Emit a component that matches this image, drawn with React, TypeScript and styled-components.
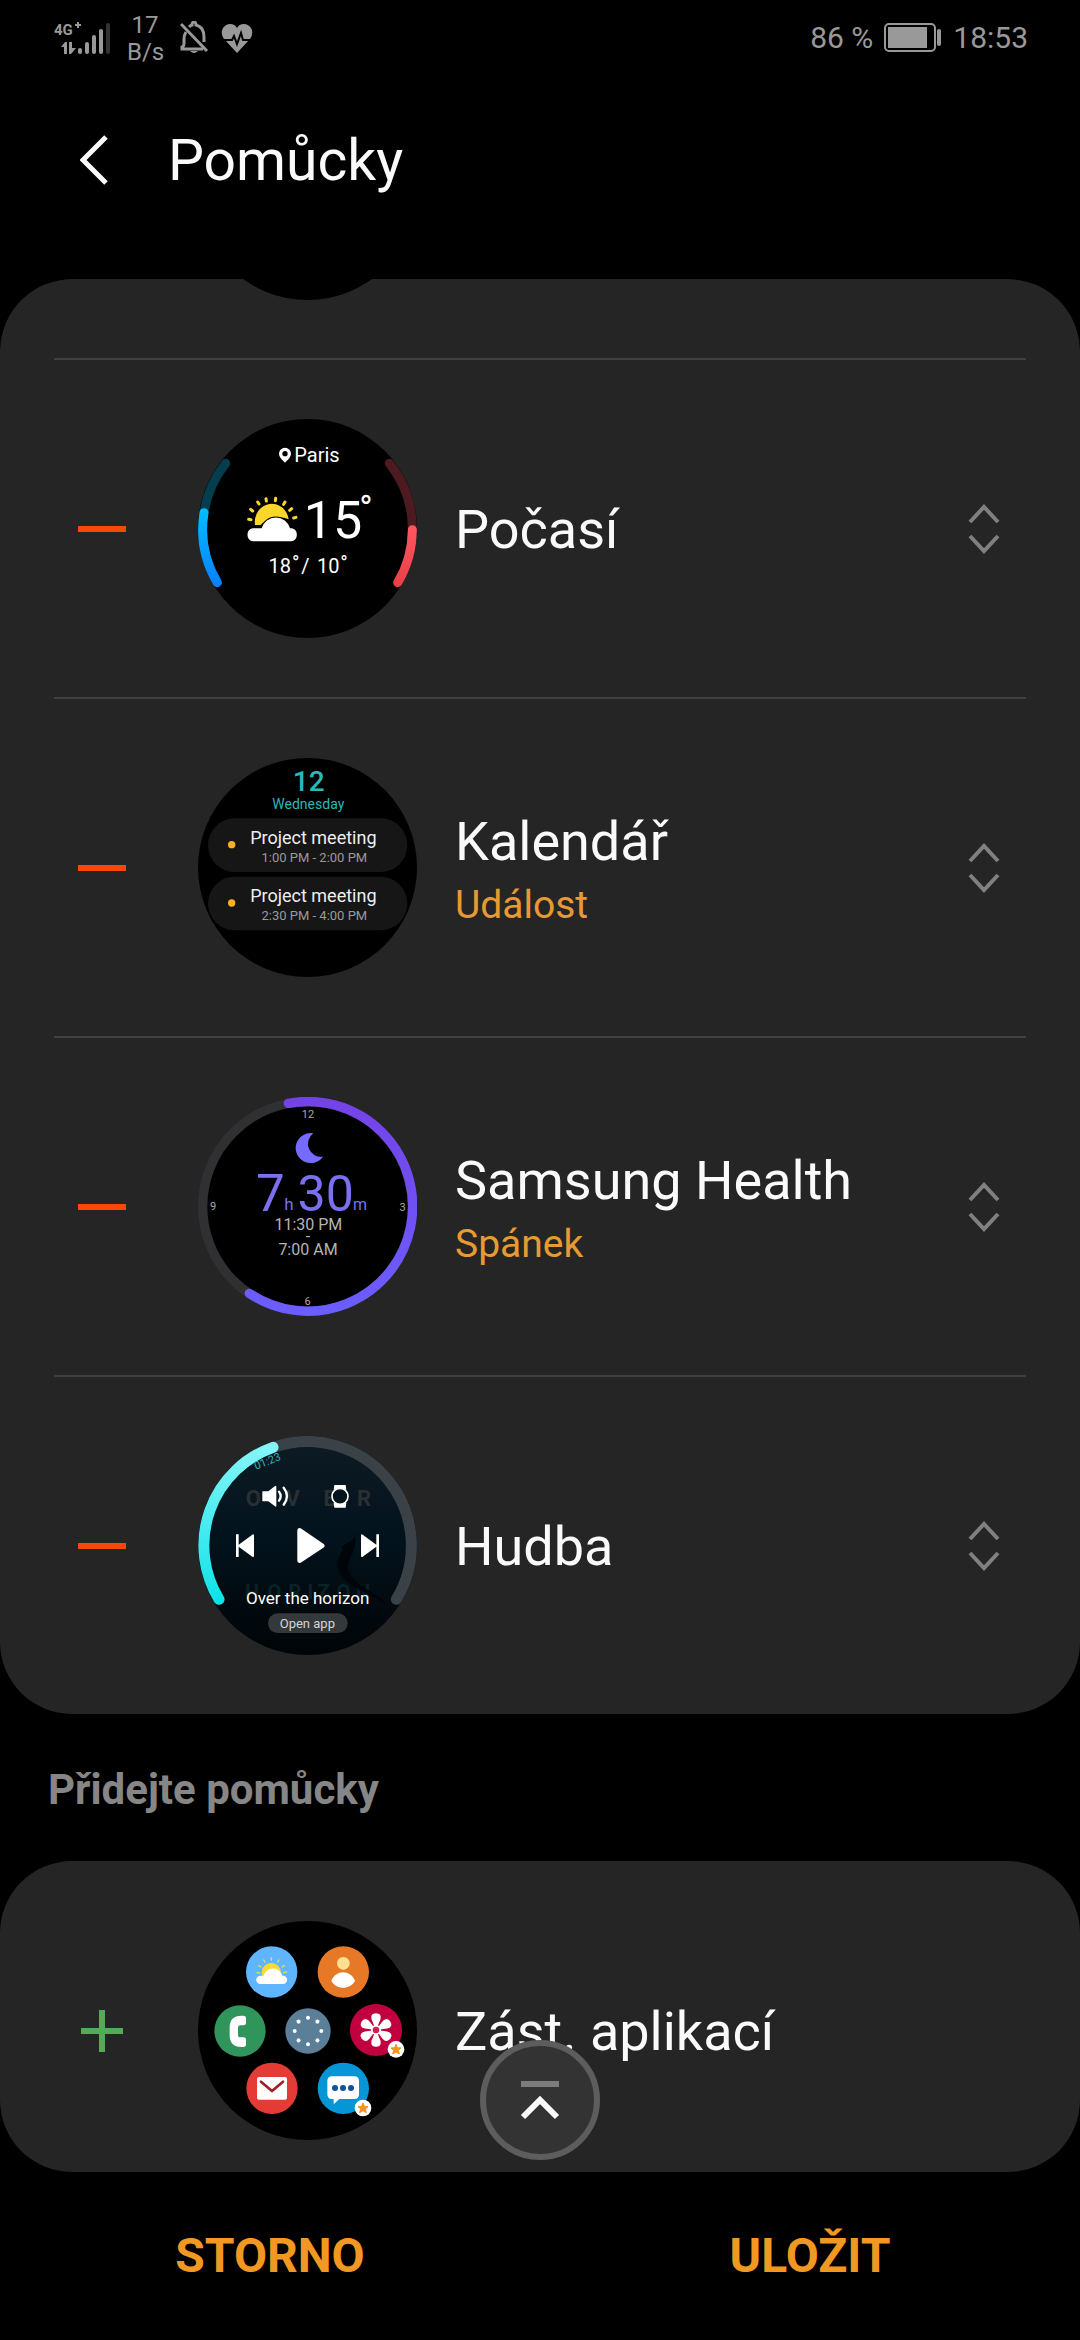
import React from "react";
import styled, { createGlobalStyle } from "styled-components";

const GlobalStyle = createGlobalStyle`
  * { box-sizing: border-box; }
  body { margin: 0; background: #000; }
  button { border: 0; padding: 0; background: none; font: inherit; cursor: pointer; }
  svg { display: block; flex: none; }
`;

const Screen = styled.div`
  display: flex;
  flex-direction: column;
  height: 100vh;
  background: #000;
  color: #fafafa;
  font-family: Roboto, "Noto Sans", sans-serif;
`;

const StatusBar = styled.div`
  display: flex;
  justify-content: space-between;
  align-items: center;
  flex: none;
  height: 76px;
  padding: 0 52px 0 54px;
  color: #999;
`;

const StatusGroup = styled.div<{ $gap: number }>`
  display: flex;
  align-items: center;
  gap: ${(p) => p.$gap}px;
`;

const NetSpeed = styled.div`
  width: 36px;
  margin: 2px 6px 0 4px;
  font-size: 24px;
  line-height: 27px;
  text-align: center;
`;

const StatusText = styled.span`
  font-size: 30px;
  line-height: 36px;
`;

const Header = styled.header`
  display: flex;
  align-items: center;
  flex: none;
  height: 167px;
  margin-bottom: 36px;
  padding: 0 54px;
`;

const BackButton = styled.button`
  display: flex;
  align-items: center;
  justify-content: center;
  width: 80px;
  height: 80px;
  margin-right: 34px;
`;

const Title = styled.h1`
  margin: 0;
  padding-top: 3px;
  font-size: 57px;
  line-height: 68px;
  font-weight: 400;
`;

const ListViewport = styled.main`
  position: relative;
  flex: 1;
  min-height: 0;
`;

const ListClip = styled.div`
  height: 100%;
  overflow: hidden;
  border-radius: 72px;
`;

const Card = styled.ul`
  margin: 0;
  padding: 0 54px;
  list-style: none;
  background: #252525;
  border-radius: 72px;
`;

const ScrolledRow = styled.li`
  display: flex;
  align-items: flex-end;
  height: 79px;
  padding: 0 0 58px 144px;
  overflow: hidden;
`;

const BlankDisc = styled.div`
  flex: none;
  width: 219px;
  height: 219px;
  border-radius: 50%;
  background: #000;
`;

const Row = styled.li<{ $divided?: boolean }>`
  display: flex;
  align-items: center;
  height: 339px;
  border-top: ${(p) => (p.$divided ? "2px solid #404040" : "0")};
`;

const EditButton = styled.button`
  display: flex;
  align-items: center;
  justify-content: center;
  width: 96px;
  height: 96px;
  margin-right: 48px;
`;

const Labels = styled.div`
  display: flex;
  flex-direction: column;
  flex: 1;
  padding: 3px 0 0 38px;
`;

const Name = styled.span`
  font-size: 54px;
  line-height: 66px;
`;

const Detail = styled.span`
  font-size: 39px;
  line-height: 48px;
  margin-top: 6px;
  color: #e89a32;
`;

const ReorderButton = styled.button`
  display: flex;
  align-items: center;
  justify-content: center;
  width: 84px;
  height: 84px;
`;

const SectionTitle = styled.h2`
  display: flex;
  align-items: center;
  height: 147px;
  margin: 0;
  padding: 4px 48px 0;
  color: #868686;
  font-size: 42px;
  line-height: 48px;
  font-weight: 700;
`;

const ToTopButton = styled.button`
  position: absolute;
  left: 50%;
  bottom: 12px;
  display: flex;
  align-items: center;
  justify-content: center;
  width: 120px;
  height: 120px;
  margin-left: -60px;
  border: 6px solid #5d5d5d;
  border-radius: 50%;
  background: #333;
`;

const Footer = styled.footer`
  display: grid;
  grid-template-columns: 1fr 1fr;
  flex: none;
  height: 168px;
`;

const FooterButton = styled.button`
  color: #f09821;
  font-size: 48px;
  line-height: 56px;
  font-weight: 700;
`;

const ROBOTO = "Roboto, 'Noto Sans', sans-serif";

/* Preview discs are drawn at three units per pixel. */
function Disc({ top, label, children }: { top: number; label: string; children: React.ReactNode }) {
  return (
    <svg width="219" height="219" viewBox={`54 ${top} 657 657`} role="img" aria-label={label} fontFamily={ROBOTO} textAnchor="middle">
      {children}
    </svg>
  );
}

function WeatherDisc() {
  const arc = (from: string, to: string, stroke: string) => (
    <path d={`M${from} A314 314 0 0 1 ${to}`} stroke={stroke} strokeWidth="27" strokeLinecap="round" fill="none" />
  );
  return (
    <Disc top={59} label="Počasí">
      <defs>
        <linearGradient id="cold" gradientUnits="userSpaceOnUse" x1="0" y1="330" x2="0" y2="560">
          <stop offset="0" stopColor="#00bdff" />
          <stop offset="1" stopColor="#0a80ff" />
        </linearGradient>
        <linearGradient id="hot" gradientUnits="userSpaceOnUse" x1="0" y1="380" x2="0" y2="560">
          <stop offset="0" stopColor="#ff5761" />
          <stop offset="1" stopColor="#e94047" />
        </linearGradient>
      </defs>
      <circle cx="382.500" cy="387.500" r="328.500" fill="#000" />
      {arc("72 340", "137 192", "#043d4d")}
      {arc("112 550", "72 340", "url(#cold)")}
      {arc("628 192", "697 391", "#4c1b20")}
      {arc("697 391", "653 550", "url(#hot)")}
      <path d="M315 145a18 18 0 0 1 18 18c0 11-11 19-18 27c-7-8-18-16-18-27a18 18 0 0 1 18-18z" fill="#fff" />
      <circle cx="315" cy="163" r="8" fill="#000" />
      <text x="411" y="188" fontSize="60" fill="#fff">Paris</text>
      <g stroke="#fbd72b" strokeWidth="9" strokeLinecap="round">
        <path d="M206 360l7 1M212 330l6 5M233 308l4 6M258 298l1 7M287 297l-1 7M315 308l-4 7M335 328l-6 5M348 354l-7 2" />
      </g>
      <path d="M225 377a51 55 0 0 1 101-17a70 62 0 0 0-84 17z" fill="#fbd72b" />
      <path d="M218 426a20 20 0 0 1 0-39h27a44 44 0 0 1 85 0h5a20 20 0 0 1 0 39z" fill="#fff" stroke="#000" strokeWidth="6" paintOrder="stroke" />
      <text x="459" y="417" fontSize="156" fill="#fff">15</text>
      <text x="558" y="365" fontSize="108" fill="#fff">°</text>
      <g fontSize="60" fill="#fff">
        <text x="299" y="521">18</text>
        <text x="347" y="511">°</text>
        <text x="376" y="521">/</text>
        <text x="445" y="521">10</text>
        <text x="492" y="511">°</text>
      </g>
    </Disc>
  );
}

function CalendarDisc() {
  const event = (y: number, time: string) => (
    <>
      <rect x="84" y={y} width="598" height="161" rx="80" fill="#161616" />
      <circle cx="155" cy={y + 79} r="11" fill="#fbb11f" />
      <text x="400" y={y + 76} fontSize="54" fill="#eee">Project meeting</text>
      <text x="403" y={y + 131} fontSize="39" fill="#9a9a9a">{time}</text>
    </>
  );
  return (
    <Disc top={57} label="Kalendář">
      <circle cx="382.500" cy="385.500" r="328.500" fill="#000" />
      <text x="386" y="157" fontSize="84" fontWeight="500" fill="#28b9b8">12</text>
      <text x="385" y="209" fontSize="42" fill="#28b9b8">Wednesday</text>
      {event(238, "1:00 PM - 2:00 PM")}
      {event(413, "2:30 PM - 4:00 PM")}
    </Disc>
  );
}

function SleepDisc() {
  return (
    <Disc top={54} label="Spánek">
      <defs>
        <linearGradient id="sleep" x1="0" y1="0" x2="0" y2="1">
          <stop offset="0" stopColor="#7443e8" />
          <stop offset="1" stopColor="#6b5dff" />
        </linearGradient>
      </defs>
      <circle cx="382.500" cy="382.500" r="314.500" fill="#000" stroke="#303033" strokeWidth="28" />
      <path d="M325 73A314.500 314.500 0 1 1 208 643" fill="none" stroke="url(#sleep)" strokeWidth="28" strokeLinecap="round" />
      <g fontSize="33" fill="#a8a8a8">
        <text x="384" y="117">12</text>
        <text x="99" y="394">9</text>
        <text x="668" y="395">3</text>
        <text x="383" y="677">6</text>
      </g>
      <path d="M400 163A45 45 0 1 0 429 233A39 39 0 0 1 400 163z" fill="#756bff" />
      <g fill="#7b70f2">
        <text x="271" y="395" fontSize="153">7</text>
        <text x="327" y="394" fontSize="51">h</text>
        <text x="437" y="395" fontSize="150">30</text>
        <text x="540" y="394" fontSize="48">m</text>
      </g>
      <g fontSize="48" fill="#b4b4b4">
        <text x="385" y="454">11:30 PM</text>
        <text x="384" y="490">-</text>
        <text x="384" y="528">7:00 AM</text>
      </g>
    </Disc>
  );
}

function MusicDisc() {
  return (
    <Disc top={51} label="Hudba">
      <defs>
        <linearGradient id="sea" x1="0" y1="0" x2="0" y2="1">
          <stop offset="0" stopColor="#0e1b24" />
          <stop offset="0.450" stopColor="#03131d" />
          <stop offset="1" stopColor="#000406" />
        </linearGradient>
        <linearGradient id="elapsed" x1="0" y1="0" x2="0" y2="1">
          <stop offset="0" stopColor="#84f5f7" />
          <stop offset="1" stopColor="#0fe3e8" />
        </linearGradient>
      </defs>
      <circle cx="382.500" cy="379.500" r="328.500" fill="url(#sea)" />
      <path d="M279 85A312 312 0 0 1 649 541" fill="none" stroke="#3a4247" strokeWidth="33" strokeLinecap="round" />
      <path d="M117 541A312 312 0 0 1 279 85" fill="none" stroke="url(#elapsed)" strokeWidth="33" strokeLinecap="round" />
      <text transform="translate(266 137) rotate(-22)" fontSize="33" fill="#39aeb6">01:23</text>
      <g fontSize="66" fontWeight="700" fill="#2a2f32">
        <text x="220" y="260">O</text>
        <text x="338" y="260">V</text>
        <text x="449" y="260">E</text>
        <text x="552" y="260">R</text>
      </g>
      <g fontSize="60" fontWeight="700" fill="#0a2226">
        <text x="216" y="541">H</text>
        <text x="283" y="541">O</text>
        <text x="345" y="541">R</text>
        <text x="391" y="541">I</text>
        <text x="431" y="541">Z</text>
        <text x="490" y="541">O</text>
        <text x="549" y="541">N</text>
      </g>
      <path d="M526 348C518 372 492 372 484 386C496 392 470 410 473 440C480 496 560 520 630 560C570 510 502 486 504 444C506 415 530 400 526 348z" fill="#000509" />
      <g fill="#fff">
        <path d="M247 217h18l20-16q4-2 4 3v56q0 5-4 2l-20-15h-18z" />
        <path d="M297 218q10 13 0 27M311 206q20 25 0 51" fill="none" stroke="#fff" strokeWidth="7" strokeLinecap="round" />
        <path d="M463 198h34l2 14h-38zM461 252h38l-2 14h-34z" />
        <circle cx="480" cy="232" r="24" fill="#06141c" stroke="#fff" strokeWidth="5" />
        <path d="M168 346h8v31l41-30q5-3 5 3v60q0 6-5 3l-41-30v31h-8z" />
        <path d="M597 346h-8v31l-41-30q-5-3-5 3v60q0 6 5 3l41-30v31h8z" />
        <path d="M352 335q0-10 10-7l68 46q8 6 0 12l-68 45q-10 3-10-7z" />
      </g>
      <text x="383" y="555" fontSize="51" fill="#fff">Over the horizon</text>
      <rect x="264" y="583" width="239" height="59" rx="29" fill="#33383b" />
      <text x="382" y="626" fontSize="39" fill="#d6d6d6">Open app</text>
    </Disc>
  );
}

function AppsDisc() {
  const badge = (x: number, y: number) => (
    <g transform={`translate(${x} ${y})`}>
      <circle r="25" fill="#fff" />
      <path d="M0-15l4 10l11 1l-8 7l3 11l-10-6l-10 6l3-11l-8-7l11-1z" fill="#f7931e" stroke="#f7931e" strokeWidth="3" strokeLinejoin="round" />
    </g>
  );
  const turn = (count: number) => Array.from({ length: count }, (_, i) => (i * 360) / count);
  return (
    <Disc top={69} label="Zást. aplikací">
      <circle cx="382.500" cy="397.500" r="328.500" fill="#000" />
      <circle cx="275" cy="222" r="77" fill="#5fb5ff" />
      <path d="M231 224l8 1M236 203l7 4M251 186l4 6M274 179v8M297 186l-4 6M313 203l-7 4M319 222l-8 2" stroke="#e3e05a" strokeWidth="4" strokeLinecap="round" />
      <circle cx="274" cy="224" r="29" fill="#fbd936" />
      <path d="M241 258a12 12 0 0 1 0-25h10a29 29 0 0 1 56 0h2a12 12 0 0 1 0 25z" fill="#fff" />

      <circle cx="490" cy="222" r="77" fill="#e77926" />
      <circle cx="490" cy="196" r="19" fill="#ffdf91" />
      <path d="M454 248c14-34 57-34 71 0c-14 28-57 28-71 0z" fill="#fff" />

      <circle cx="180" cy="399" r="77" fill="#2f955a" />
      <path d="M190 353q8 0 8 8v14q0 7-7 7h-10q-7 0-7 8v20q0 8 7 8h10q7 0 7 7v14q0 8-8 8h-6q-35 0-35-35v-24q0-35 35-35z" fill="#fff" />

      <circle cx="384" cy="399" r="68" fill="#5b7f99" />
      {turn(8).map((a) => (
        <circle key={a} cx="384" cy="359" r="6" fill="#fff" transform={`rotate(${a} 384 399)`} />
      ))}

      <circle cx="588" cy="396" r="78" fill="#c1003f" />
      {turn(6).map((a) => (
        <path key={a} d="M588 396L575 365Q570 346 588 346Q606 346 601 365z" fill="#fff" transform={`rotate(${a} 588 396)`} />
      ))}
      <circle cx="588" cy="396" r="15" fill="#fff" />
      <circle cx="588" cy="396" r="10" fill="#d91b50" />
      {badge(648, 454)}

      <circle cx="276" cy="571" r="77" fill="#e43b37" />
      <rect x="231" y="537" width="90" height="68" rx="6" fill="#fff" />
      <path d="M243 551l33 28l33-28" fill="none" stroke="#a01f24" strokeWidth="8" strokeLinecap="round" strokeLinejoin="round" />

      <circle cx="490" cy="571" r="77" fill="#0796d5" />
      <path d="M456 535h67q14 0 14 14v40q0 14-14 14h-45l-17 16v-16h-5q-14 0-14-14v-40q0-14 14-14z" fill="#fff" />
      <circle cx="465" cy="570" r="9" fill="#134f9f" />
      <circle cx="489" cy="570" r="9" fill="#134f9f" />
      <circle cx="513" cy="570" r="9" fill="#134f9f" />
      {badge(549, 630)}
    </Disc>
  );
}

function SignalIcon() {
  return (
    <svg width="58" height="34" viewBox="0 0 58 34" fontFamily={ROBOTO} fill="#999" aria-hidden="true">
      <text x="0" y="14" fontSize="15" fontWeight="700">4G</text>
      <path d="M21 3h2V1h2v2h2v2h-2v2h-2V5h-2z" />
      <path d="M7 26l4-5h2v12h-3v-7zM15 21h3v6h4l-5 6h-2z" />
      <rect x="24" y="27" width="4" height="6" rx="2" />
      <rect x="31" y="21" width="4" height="12" rx="2" />
      <rect x="38" y="14" width="4" height="19" rx="2" />
      <rect x="45" y="8" width="4" height="25" rx="2" />
      <rect x="52" y="2" width="4" height="31" rx="2" fill="#333" />
    </svg>
  );
}

function MutedBellIcon() {
  return (
    <svg width="30" height="34" viewBox="0 0 30 34" fill="none" stroke="#999" strokeWidth="3" aria-hidden="true">
      <path d="M1 3L27 30" />
      <path d="M6 11Q4 14 4 18V23Q4 25 2 26V28H23M9 6Q11 4 12 4Q12 1 14 1Q16 1 16 4Q24 6 24 16V21" />
      <path d="M10 30H18Q14 34 10 30z" fill="#999" stroke="none" />
    </svg>
  );
}

function HeartIcon() {
  return (
    <svg width="32" height="34" viewBox="0 0 32 34" aria-hidden="true">
      <path d="M16 32L3 18Q-1 12 2 7Q5 3 9 3Q14 3 16 7Q18 3 23 3Q27 3 30 7Q33 12 29 18z" fill="#999" />
      <path d="M0 19H11L13 15L16 23L20 12L22 19H32" fill="none" stroke="#000" strokeWidth="2" />
    </svg>
  );
}

function BatteryIcon() {
  return (
    <svg width="58" height="30" viewBox="0 0 58 30" aria-hidden="true">
      <rect x="1" y="1" width="50" height="27" rx="4" fill="none" stroke="#999" strokeWidth="2" />
      <rect x="4" y="4" width="39" height="21" fill="#999" />
      <rect x="53" y="6" width="4" height="17" rx="2" fill="#999" />
    </svg>
  );
}

const items = [
  { name: "Počasí", detail: "", disc: <WeatherDisc /> },
  { name: "Kalendář", detail: "Událost", disc: <CalendarDisc /> },
  { name: "Samsung Health", detail: "Spánek", disc: <SleepDisc /> },
  { name: "Hudba", detail: "", disc: <MusicDisc /> },
];

export default function App() {
  return (
    <Screen>
      <GlobalStyle />
      <StatusBar>
        <StatusGroup $gap={11}>
          <SignalIcon />
          <NetSpeed>
            17
            <br />
            B/s
          </NetSpeed>
          <MutedBellIcon />
          <HeartIcon />
        </StatusGroup>
        <StatusGroup $gap={11}>
          <StatusText>86 %</StatusText>
          <BatteryIcon />
          <StatusText>18:53</StatusText>
        </StatusGroup>
      </StatusBar>

      <Header>
        <BackButton aria-label="Zpět">
          <svg width="28" height="50" viewBox="0 0 28 50" fill="none" stroke="#fafafa" strokeWidth="5">
            <path d="M26 2L3 25L26 48" />
          </svg>
        </BackButton>
        <Title>Pomůcky</Title>
      </Header>

      <ListViewport>
        <ListClip>
          <Card>
            <ScrolledRow>
              <BlankDisc />
            </ScrolledRow>
            {items.map((item) => (
              <Row key={item.name} $divided>
                <EditButton aria-label={`Odebrat ${item.name}`}>
                  <svg width="48" height="48" viewBox="0 0 48 48">
                    <rect y="21" width="48" height="6" fill="#fb4708" />
                  </svg>
                </EditButton>
                {item.disc}
                <Labels>
                  <Name>{item.name}</Name>
                  {item.detail && <Detail>{item.detail}</Detail>}
                </Labels>
                <ReorderButton aria-label={`Přesunout ${item.name}`}>
                  <svg width="32" height="50" viewBox="0 0 32 50" fill="none" stroke="#808080" strokeWidth="4">
                    <path d="M2 18L16 3L30 18M2 32L16 47L30 32" />
                  </svg>
                </ReorderButton>
              </Row>
            ))}
          </Card>
          <SectionTitle>Přidejte pomůcky</SectionTitle>
          <Card>
            <Row>
              <EditButton aria-label="Přidat Zást. aplikací">
                <svg width="42" height="42" viewBox="0 0 42 42" fill="#54ab57">
                  <path d="M18 0h6v18h18v6H24v18h-6V24H0v-6h18z" />
                </svg>
              </EditButton>
              <AppsDisc />
              <Labels>
                <Name>Zást. aplikací</Name>
              </Labels>
            </Row>
          </Card>
        </ListClip>
        <ToTopButton aria-label="Nahoru">
          <svg width="40" height="40" viewBox="0 0 40 40" fill="none" strokeWidth="6">
            <path d="M1 4H39" stroke="#7c7c7c" />
            <path d="M3 37L20 20L37 37" stroke="#fafafa" />
          </svg>
        </ToTopButton>
      </ListViewport>

      <Footer>
        <FooterButton>STORNO</FooterButton>
        <FooterButton>ULOŽIT</FooterButton>
      </Footer>
    </Screen>
  );
}
